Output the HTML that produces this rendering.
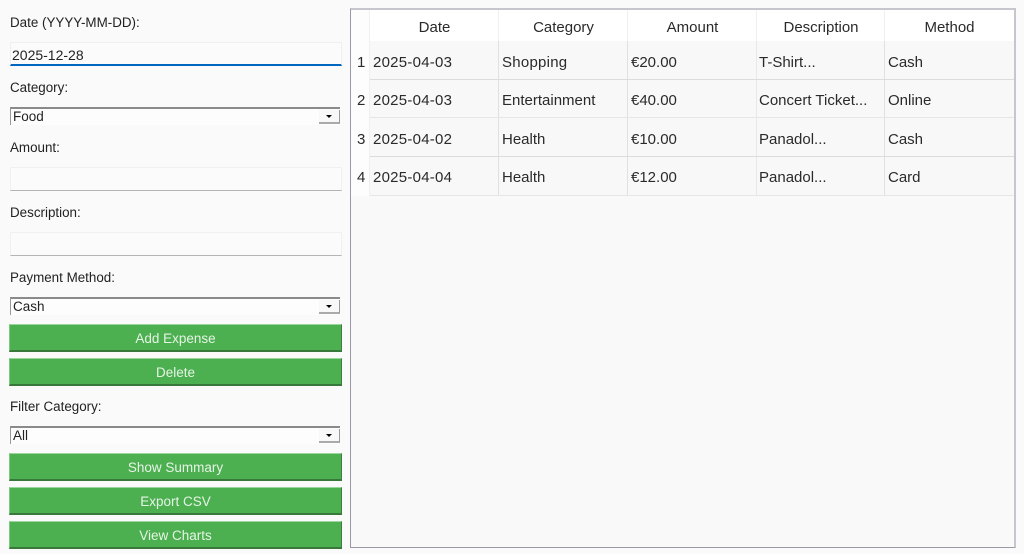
<!DOCTYPE html>
<html><head><meta charset="utf-8">
<style>
html,body{margin:0;padding:0;width:1024px;height:554px;overflow:hidden;background:#fafafa}
body{position:relative;font-family:"Liberation Sans",sans-serif;color:#1a1a1a}
div{position:absolute;box-sizing:border-box}
.l{left:10px;font-size:13.4px;line-height:18px;height:18px;white-space:nowrap;color:#222}
.i{left:10px;width:332px;background:#fbfbfb;border:1px solid #f0f0f0;border-bottom:1px solid #b4b4b4}
.c{left:10px;width:330px;height:18px;background:#fdfdfd;border-top:2px solid #8a8a8a;border-left:1px solid #999;font-size:13.5px;line-height:16px;padding-left:2px;color:#222;white-space:nowrap}
.a{left:308px;top:1px;width:21px;height:14px;background:#f8f8f8;border-right:1px solid #999;border-bottom:2px solid #aaa}
.a:after{content:"";position:absolute;left:7px;top:5px;border-left:3px solid transparent;border-right:3px solid transparent;border-top:3px solid #000}
.b{left:9px;width:333px;height:28px;background:#4caf50;border-top:1px solid #9ad69d;border-left:1px solid #7cc880;border-right:1px solid #3c7f40;border-bottom:2px solid #38783b;color:#e6f4e6;font-size:13.5px;line-height:27px;text-align:center;white-space:nowrap}
.t{font-size:15px;line-height:20px;height:20px;white-space:nowrap;color:#2a2a2a}
.d{letter-spacing:.25px}
.h{text-align:center}
.vl{width:1px;top:10px;height:186px;background:#f0f0f0}
.vr{width:1px;top:41px;height:155px;background:#e0e0e0}
.hr{left:370px;width:644px;height:1px;background:#dcdcdc}
</style></head><body>
<div class="l" style="top:14px">Date (YYYY-MM-DD):</div>
<div class="i" style="top:42px;height:24px;border-bottom:2px solid #0067c0"></div>
<div class="l" style="left:12px;top:46px;font-size:14px;color:#222">2025-12-28</div>
<div class="l" style="top:79px">Category:</div>
<div class="c" style="top:107px">Food<div class="a"></div></div>
<div class="l" style="top:139px">Amount:</div>
<div class="i" style="top:167px;height:24px"></div>
<div class="l" style="top:204px">Description:</div>
<div class="i" style="top:232px;height:24px"></div>
<div class="l" style="top:269px">Payment Method:</div>
<div class="c" style="top:297px">Cash<div class="a"></div></div>
<div class="b" style="top:324px">Add Expense</div>
<div class="b" style="top:358px">Delete</div>
<div class="l" style="top:398px">Filter Category:</div>
<div class="c" style="top:426px">All<div class="a"></div></div>
<div class="b" style="top:453px">Show Summary</div>
<div class="b" style="top:487px">Export CSV</div>
<div class="b" style="top:521px">View Charts</div>

<div style="left:350px;top:8px;width:666px;height:540px;background:#f9f9f9;border-top:2px solid #c6c6cc;border-left:1px solid #9a9aa6;border-right:2px solid #c6c6cc;border-bottom:1px solid #9a9aa6"></div>
<div style="left:351px;top:10px;width:19px;height:186px;background:#fdfdfd"></div>
<div style="left:370px;top:10px;width:644px;height:31px;background:#fff"></div>
<div style="left:370px;top:41px;width:644px;height:155px;background:#f8f8f8"></div>
<div class="vl" style="left:369px"></div>
<div class="vl" style="left:498px;height:31px"></div><div class="vl" style="left:627px;height:31px"></div><div class="vl" style="left:756px;height:31px"></div><div class="vl" style="left:884px;height:31px"></div>
<div class="vr" style="left:498px"></div><div class="vr" style="left:627px"></div><div class="vr" style="left:756px;background:#e8e8e8"></div><div class="vr" style="left:884px"></div>
<div class="hr" style="top:79px"></div><div class="hr" style="top:117px;background:#e6e6e6"></div><div class="hr" style="top:156px"></div><div class="hr" style="top:195px;background:#e6e6e6"></div>

<div class="t h" style="left:370px;width:129px;top:18px">Date</div>
<div class="t h" style="left:499px;width:129px;top:18px">Category</div>
<div class="t h" style="left:628px;width:129px;top:18px">Amount</div>
<div class="t h" style="left:757px;width:128px;top:18px">Description</div>
<div class="t h" style="left:885px;width:129px;top:18px">Method</div>

<div class="t" style="left:357px;top:53px">1</div><div class="t d" style="left:373px;top:53px">2025-04-03</div><div class="t d" style="left:502px;top:53px">Shopping</div><div class="t" style="left:631px;top:53px">€20.00</div><div class="t" style="left:759px;top:53px">T-Shirt...</div><div class="t" style="left:888px;top:53px">Cash</div>
<div class="t" style="left:357px;top:91px">2</div><div class="t d" style="left:373px;top:91px">2025-04-03</div><div class="t" style="left:502px;top:91px">Entertainment</div><div class="t" style="left:631px;top:91px">€40.00</div><div class="t" style="left:759px;top:91px">Concert Ticket...</div><div class="t" style="left:888px;top:91px">Online</div>
<div class="t" style="left:357px;top:130px">3</div><div class="t d" style="left:373px;top:130px">2025-04-02</div><div class="t" style="left:502px;top:130px">Health</div><div class="t" style="left:631px;top:130px">€10.00</div><div class="t" style="left:759px;top:130px">Panadol...</div><div class="t" style="left:888px;top:130px">Cash</div>
<div class="t" style="left:357px;top:168px">4</div><div class="t d" style="left:373px;top:168px">2025-04-04</div><div class="t" style="left:502px;top:168px">Health</div><div class="t" style="left:631px;top:168px">€12.00</div><div class="t" style="left:759px;top:168px">Panadol...</div><div class="t" style="left:888px;top:168px">Card</div>
</body></html>
